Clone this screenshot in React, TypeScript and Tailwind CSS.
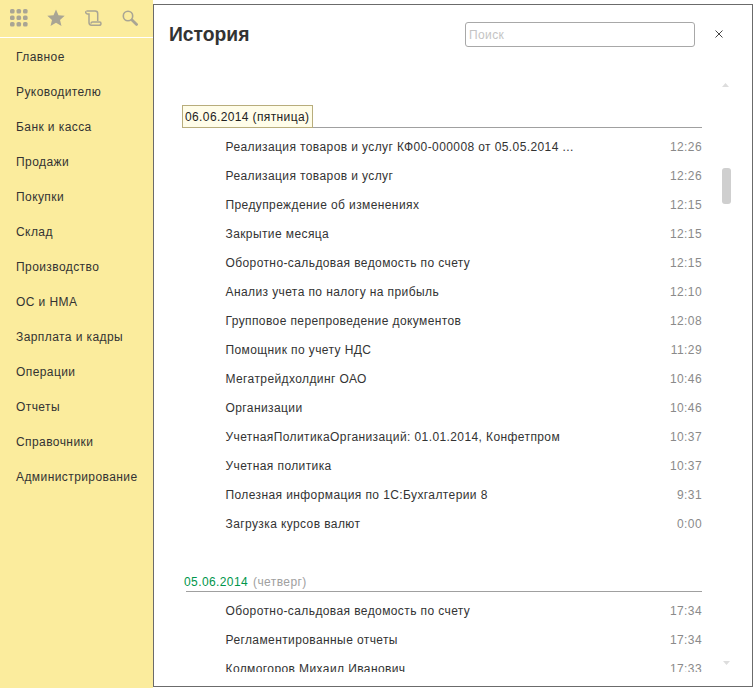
const FONT = "font-['Liberation_Sans',Arial,sans-serif]";

const nav = ["Главное","Руководителю","Банк и касса","Продажи","Покупки","Склад","Производство","ОС и НМА","Зарплата и кадры","Операции","Отчеты","Справочники","Администрирование"];

const first: [string,string][] = [
["Реализация товаров и услуг КФ00-000008 от 05.05.2014 ...","12:26"],
["Реализация товаров и услуг","12:26"],
["Предупреждение об изменениях","12:15"],
["Закрытие месяца","12:15"],
["Оборотно-сальдовая ведомость по счету","12:15"],
["Анализ учета по налогу на прибыль","12:10"],
["Групповое перепроведение документов","12:08"],
["Помощник по учету НДС","11:29"],
["Мегатрейдхолдинг ОАО","10:46"],
["Организации","10:46"],
["УчетнаяПолитикаОрганизаций: 01.01.2014, Конфетпром","10:37"],
["Учетная политика","10:37"],
["Полезная информация по 1С:Бухгалтерии 8","9:31"],
["Загрузка курсов валют","0:00"],
];
const second: [string,string][] = [
["Оборотно-сальдовая ведомость по счету","17:34"],
["Регламентированные отчеты","17:34"],
["Колмогоров Михаил Иванович","17:33"],
];

function Row({ t, time }: { t: string; time: string }) {
  return (
    <div className="flex h-[29px] items-center justify-between pl-[40px] shrink-0">
      <span className="-ml-[0.5px] text-[#333333] tracking-[0.4px] whitespace-nowrap">{t}</span>
      <span className="text-[#8a8a8a] tracking-[0.4px]">{time}</span>
    </div>
  );
}

export default function App() {
  return (
    <div className={`${FONT} flex h-[691px] w-[753px] overflow-hidden bg-white text-[12px] leading-[14px]`}>
      <aside className="flex h-[688px] w-[153px] shrink-0 flex-col bg-[#fbec9d]">
        <div className="flex h-[38px] items-center border-b border-white pl-[10px] pb-[1px] shrink-0">
          <svg width="18" height="18" viewBox="0 0 18 18" fill="#a9a594" className="shrink-0">
            {[0,6.5,13].map(y => [0,6.5,13].map(x => <rect key={`${x}-${y}`} x={x} y={y} width="4.6" height="4.6" rx="1.6" />))}
          </svg>
          <svg width="18" height="18" viewBox="0 0 18 18" fill="#a9a594" className="ml-[19px] shrink-0">
            <path d="M9 0.5l2.5 5.8 6.2.5-4.7 4.1 1.5 6.1L9 13.7l-5.5 3.3L5 10.9.3 6.8l6.2-.5z" />
          </svg>
          <svg width="17" height="16" viewBox="0 0 17 16" fill="none" stroke="#a9a594" strokeWidth="1.5" className="ml-[20px] shrink-0">
            <path d="M1.5 1.5c-.8 0-1 .8-.6 1.5.3.6.8.9 1.6.9h1.5v8.6c0 1.4 1 2.7 2.5 2.7H14c1.2 0 2-.8 2-1.8 0-.9-.6-1.4-1.4-1.4H7.5c-1 0-1.5.7-1.3 1.6" />
            <path d="M1.5 1h8.6c1.6 0 2.6 1 2.6 2.5v7.6" />
          </svg>
          <svg width="16" height="16" viewBox="0 0 16 16" fill="none" stroke="#a9a594" className="ml-[20px] shrink-0">
            <circle cx="6" cy="6" r="4.7" strokeWidth="1.6" />
            <path d="M10 10l4.6 4.4" strokeWidth="2.8" strokeLinecap="round" />
          </svg>
        </div>
        <nav className="flex flex-col pl-[16px] pt-[1px]">
          {nav.map(n => (
            <div key={n} className="flex h-[35px] items-center text-[#333333] tracking-[0.42px] whitespace-nowrap">{n}</div>
          ))}
        </nav>
      </aside>

      <main className="mt-[4px] flex h-[683px] w-[600px] shrink-0 flex-col overflow-hidden border border-[#6b6b6b] bg-white">
        <header className="flex h-[64px] shrink-0 items-start justify-between">
          <h1 className="ml-[15px] mt-[18px] text-[19.3px] font-bold leading-[23px] text-[#333333]">История</h1>
          <div className="mt-[17px] flex items-start">
            <div className="flex h-[25px] w-[230px] items-center rounded-[3px] border border-[#a8a8a8] pl-[3px] tracking-[0.4px] text-[#c4c4c4]">Поиск</div>
            <svg width="8" height="8" viewBox="0 0 8 8" stroke="#444444" strokeWidth="1" className="ml-[20px] mr-[29px] mt-[8px]">
              <path d="M.5.5l7 7M7.5.5l-7 7" />
            </svg>
          </div>
        </header>

        <div className="flex min-h-0 flex-1">
          <div className="flex h-[603px] w-[548px] shrink-0 flex-col overflow-hidden pl-[32px]">
            <div className="mt-[37px] flex h-[22px] shrink-0 items-end border-b border-[#a0a0a0] -ml-[4px]">
              <div className="-mb-[1px] flex h-[23px] items-center border border-[#b8ad7c] bg-[#fffde9] pl-[2px] pr-[3px] text-[#222222] tracking-[0.38px] whitespace-nowrap">06.06.2014 (пятница)</div>
            </div>
            <div className="flex shrink-0 flex-col pt-[4px]">
              {first.map(([t, time]) => <Row key={t} t={t} time={time} />)}
            </div>
            <div className="mt-[35px] flex h-[19px] shrink-0 items-center border-b border-[#a0a0a0] tracking-[0.4px] whitespace-nowrap">
              <span className="-ml-[2px] text-[#00964b]">05.06.2014</span>
              <span className="ml-[5px] text-[#a0a0a0]">(четверг)</span>
            </div>
            <div className="flex shrink-0 flex-col pt-[4px]">
              {second.map(([t, time]) => <Row key={t} t={t} time={time} />)}
            </div>
          </div>

          <div className="relative flex-1">
            <svg width="7" height="4" viewBox="0 0 7 4" fill="#dddddd" className="absolute left-[20px] top-[14px]"><path d="M3.5 0L7 4H0z" /></svg>
            <div className="absolute left-[20px] top-[99px] h-[36px] w-[9px] rounded-[3px] bg-[#cfcfcf]" />
            <svg width="7" height="4" viewBox="0 0 7 4" fill="#dddddd" className="absolute left-[21px] top-[592px]"><path d="M0 0h7L3.5 4z" /></svg>
          </div>
        </div>
      </main>
    </div>
  );
}
